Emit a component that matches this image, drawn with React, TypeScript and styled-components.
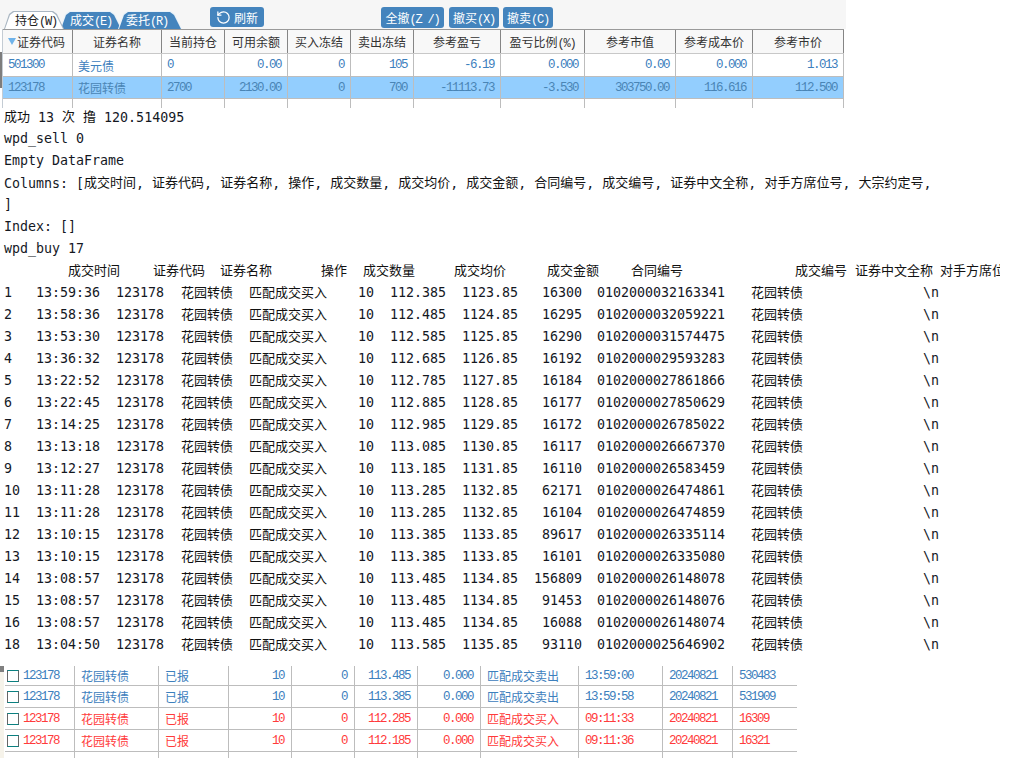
import React from 'react';
import styled, { createGlobalStyle } from 'styled-components';
import { RotateCcw } from 'lucide-react';

const Global = createGlobalStyle`
  html, body { margin: 0; padding: 0; background: #fff; }
  #root { width: 1015px; height: 769px; overflow: hidden; }
`;

const BLUE = '#3d80bd';
const RED = '#ff3b3b';
const CJK = '"Noto Sans CJK SC", "Liberation Sans", sans-serif';
const MONO = '"Liberation Mono", "Noto Sans CJK SC", monospace';
const CONSOLE = '"DejaVu Sans Mono", "Noto Sans CJK SC", monospace';

const Page = styled.div`
  width: 1015px;
  height: 769px;
  overflow: hidden;
  position: relative;
  font-family: ${CJK};
  font-size: 12px;
`;

/* ---------- toolbar ---------- */
const Toolbar = styled.div`
  width: 846px;
  height: 29px;
  background: #f6f6f6;
  display: flex;
  align-items: flex-start;
  box-sizing: border-box;
  padding-top: 7px;
`;
const Tabs = styled.div`
  display: flex;
  margin: 4px 0 0 4px;
  height: 18px;
  width: 206px;
`;
const Tab = styled.div<{ $active?: boolean; $w: number; $pl: number }>`
  width: ${p => p.$w}px;
  height: 18px;
  margin-right: -4px;
  padding-left: ${p => p.$pl}px;
  box-sizing: border-box;
  position: relative;
  z-index: ${p => (p.$active ? 2 : 1)};
  display: flex;
  align-items: center;
  color: ${p => (p.$active ? '#222' : '#fff')};
  background: ${p => (p.$active ? '#a9b6c2' : '#eaf2f8')};
  clip-path: polygon(0 100%, 5px 3px, 9px 0, calc(100% - 11px) 0, calc(100% - 7px) 3px, 100% 100%);
  &::before {
    content: '';
    position: absolute;
    inset: 0;
    background: ${p => (p.$active ? '#fff' : '#4484bd')};
    clip-path: polygon(1px 100%, 6px 4px, 10px 1px, calc(100% - 12px) 1px, calc(100% - 8px) 4px, calc(100% - 1px) 100%);
  }
  & > span { position: relative; }
`;
const Latin = styled.span`
  font-family: ${MONO};
  font-size: 12px;
  letter-spacing: -1.2px;
`;
const Button = styled.div<{ $w: number; $ml: number; $h?: number }>`
  width: ${p => p.$w}px;
  height: ${p => p.$h ?? 21}px;
  margin-left: ${p => p.$ml}px;
  background: #4484bd;
  border-radius: 3px;
  color: #fff;
  display: flex;
  align-items: center;
  justify-content: center;
  gap: 3px;
  white-space: pre;
`;

/* ---------- positions table ---------- */
const POS_COLS = '70px 89px 63px 63px 63px 63px 87px 84px 91px 77px 91px';
const ScrollMark = styled.div`
  position: absolute;
  left: 0;
  top: 52px;
  width: 2px;
  height: 36px;
  background: #7d7d7d;
`;
const Positions = styled.div`
  margin-left: 2px;
  width: 841px;
  border-left: 1px solid #c4ccd4;
`;
const HeadRow = styled.div`
  display: grid;
  grid-template-columns: ${POS_COLS};
  height: 25px;
  box-sizing: border-box;
  background: #f8f8f8;
  border-top: 1px solid #9a9a9a;
  border-bottom: 1px solid #c8c8c8;
`;
const HeadCell = styled.div`
  box-sizing: border-box;
  border-right: 1px solid #858585;
  display: flex;
  align-items: center;
  justify-content: center;
  color: #333;
  gap: 1px;
`;
const SortMark = styled.i`
  width: 0;
  height: 0;
  border-left: 4px solid transparent;
  border-right: 4px solid transparent;
  border-top: 7px solid #6fb3ea;
  margin-left: -2px;
`;
const PosRow = styled.div<{ $selected?: boolean; $h: number; $ruled?: boolean }>`
  display: grid;
  grid-template-columns: ${POS_COLS};
  height: ${p => p.$h}px;
  box-sizing: border-box;
  background: ${p => (p.$selected ? '#93cefe' : '#fff')};
  border-bottom: ${p => (p.$ruled ? '1px solid #bdbdbd' : 'none')};
  color: ${p => (p.$selected ? '#4a85b5' : BLUE)};
`;
const Cell = styled.div<{ $right?: boolean; $name?: boolean }>`
  box-sizing: border-box;
  border-right: 1px solid #bdbdbd;
  display: flex;
  align-items: center;
  justify-content: ${p => (p.$right ? 'flex-end' : 'flex-start')};
  padding: ${p => (p.$right ? '0 6px 0 0' : '0 0 0 5px')};
  white-space: pre;
  font-family: ${p => (p.$name ? CJK : MONO)};
  font-size: ${p => (p.$name ? 12 : 12.5)}px;
  letter-spacing: ${p => (p.$name ? 0 : -1.5)}px;
`;

/* ---------- console ---------- */
const Console = styled.div`
  margin-top: -2px;
  padding-left: 4px;
  font-family: ${CONSOLE};
  font-size: 13.3px;
  color: #14181f;
`;
const Line = styled.div`
  height: 22px;
  line-height: 22px;
  white-space: pre;
`;
const Han = styled.span`
  font-family: ${CJK};
  font-size: 13px;
  color: #111;
`;
const GridHan = styled(Han)`
  position: relative;
  top: -1px;
`;
const FrameHead = styled.div`
  display: grid;
  grid-template-columns: 64px 85px 67px 101px 42px 91px 93px 84px 164px 60px 85px 60px;
  height: 22px;
  line-height: 22px;
  white-space: pre;
  overflow: hidden;
  width: 996px;
`;
const Clip = styled.div`
  overflow: hidden;
`;
const FrameRow = styled.div`
  display: grid;
  grid-template-columns: 32px 80px 65px 68px 101px 24px 72px 72px 64px 143px 198px 20px;
  height: 22px;
  line-height: 22px;
  white-space: pre;
`;
const Num = styled.div`
  text-align: right;
`;
const Pad = styled.div`
  padding-left: 26px;
`;

/* ---------- orders table ---------- */
const ORD_COLS = '70px 84px 70px 63px 63px 63px 63px 98px 84px 70px 63px';
const Orders = styled.div`
  width: 797px;
  display: flex;
  margin-top: 10px;
`;
const Gutter = styled.div`
  flex: none;
  width: 4px;
  height: 92px;
  margin-right: 1px;
  background: linear-gradient(#808080 0 6px, #f6f3ea 6px);
`;
const OrdBody = styled.div`
  flex: 1;
`;
const OrdRow = styled.div<{ $h: number; $ruled?: boolean; $red?: boolean }>`
  display: grid;
  grid-template-columns: ${ORD_COLS};
  height: ${p => p.$h}px;
  box-sizing: border-box;
  border-bottom: ${p => (p.$ruled ? '1px solid #bdbdbd' : 'none')};
  color: ${p => (p.$red ? RED : BLUE)};
`;
const OrdCell = styled.div<{ $right?: boolean; $name?: boolean; $last?: boolean }>`
  box-sizing: border-box;
  border-right: ${p => (p.$last ? 'none' : '1px solid #bdbdbd')};
  display: flex;
  align-items: center;
  justify-content: ${p => (p.$right ? 'flex-end' : 'flex-start')};
  padding: ${p => (p.$right ? '0 7px 0 0' : '0 0 0 6px')};
  white-space: pre;
  font-family: ${p => (p.$name ? CJK : MONO)};
  font-size: ${p => (p.$name ? 12 : 12.5)}px;
  letter-spacing: ${p => (p.$name ? 0 : -1.5)}px;
`;
const CodeCell = styled(OrdCell)`
  padding-left: 2px;
  gap: 4px;
`;
const Check = styled.i`
  width: 12px;
  height: 12px;
  box-sizing: border-box;
  border: 1px solid #666;
  border-top-color: #0a8080;
  border-bottom-color: #0a8080;
  flex: none;
`;

/* ---------- data ---------- */
const split = (s: string) =>
  s.split(/([\u4e00-\u9fff]+)/).map((t, i) => (i % 2 ? <GridHan key={i}>{t}</GridHan> : t));
const T = ({ s }: { s: string }) => <>{split(s)}</>;

const head = ['证券名称', '当前持仓', '可用余额', '买入冻结', '卖出冻结', '参考盈亏'];
const frameHead = ['', '成交时间', '证券代码', '证券名称', '操作', '成交数量', '成交均价', '成交金额', '合同编号', '成交编号', '证券中文全称', '对手方席位号'];

const trades: [string, string, string, string, string, string][] = [
  ['1', '13:59:36', '112.385', '1123.85', '16300', '0102000032163341'],
  ['2', '13:58:36', '112.485', '1124.85', '16295', '0102000032059221'],
  ['3', '13:53:30', '112.585', '1125.85', '16290', '0102000031574475'],
  ['4', '13:36:32', '112.685', '1126.85', '16192', '0102000029593283'],
  ['5', '13:22:52', '112.785', '1127.85', '16184', '0102000027861866'],
  ['6', '13:22:45', '112.885', '1128.85', '16177', '0102000027850629'],
  ['7', '13:14:25', '112.985', '1129.85', '16172', '0102000026785022'],
  ['8', '13:13:18', '113.085', '1130.85', '16117', '0102000026667370'],
  ['9', '13:12:27', '113.185', '1131.85', '16110', '0102000026583459'],
  ['10', '13:11:28', '113.285', '1132.85', '62171', '0102000026474861'],
  ['11', '13:11:28', '113.285', '1132.85', '16104', '0102000026474859'],
  ['12', '13:10:15', '113.385', '1133.85', '89617', '0102000026335114'],
  ['13', '13:10:15', '113.385', '1133.85', '16101', '0102000026335080'],
  ['14', '13:08:57', '113.485', '1134.85', '156809', '0102000026148078'],
  ['15', '13:08:57', '113.485', '1134.85', '91453', '0102000026148076'],
  ['16', '13:08:57', '113.485', '1134.85', '16088', '0102000026148074'],
  ['18', '13:04:50', '113.585', '1135.85', '93110', '0102000025646902'],
];

const orders = [
  { red: false, price: '113.485', op: '匹配成交卖出', time: '13:59:00', id: '530483', h: 20 },
  { red: false, price: '113.385', op: '匹配成交卖出', time: '13:59:58', id: '531909', h: 22 },
  { red: true, price: '112.285', op: '匹配成交买入', time: '09:11:33', id: '16309', h: 22 },
  { red: true, price: '112.185', op: '匹配成交买入', time: '09:11:36', id: '16321', h: 22 },
];

const positions = [
  ['501300', '美元债', '0', '0.00', '0', '105', '-6.19', '0.000', '0.00', '0.000', '1.013'],
  ['123178', '花园转债', '2700', '2130.00', '0', '700', '-11113.73', '-3.530', '303750.00', '116.616', '112.500'],
];

const PosCells = ({ r }: { r: string[] }) => (
  <>
    {r.map((v, i) => (
      <Cell key={i} $name={i === 1} $right={i > 2}>{v}</Cell>
    ))}
  </>
);

export default function App() {
  return (
    <Page>
      <Global />
      <ScrollMark />
      <Toolbar>
        <Tabs>
          <Tab $active $w={60} $pl={11}><span>持仓<Latin>(W)</Latin></span></Tab>
          <Tab $w={62} $pl={10}><span>成交<Latin>(E)</Latin></span></Tab>
          <Tab $w={64} $pl={8}><span>委托<Latin>(R)</Latin></span></Tab>
        </Tabs>
        <Button $w={54} $ml={0} $h={20}><RotateCcw size={15} strokeWidth={2} />刷新</Button>
        <Button $w={63} $ml={117}><span>全撤<Latin>(Z /)</Latin></span></Button>
        <Button $w={50} $ml={5}><span>撤买<Latin>(X)</Latin></span></Button>
        <Button $w={50} $ml={4}><span>撤卖<Latin>(C)</Latin></span></Button>
      </Toolbar>

      <Positions>
        <HeadRow>
          <HeadCell><SortMark />证券代码</HeadCell>
          {head.map(h => <HeadCell key={h}>{h}</HeadCell>)}
          <HeadCell><span>盈亏比例<Latin>(%)</Latin></span></HeadCell>
          <HeadCell>参考市值</HeadCell>
          <HeadCell>参考成本价</HeadCell>
          <HeadCell>参考市价</HeadCell>
        </HeadRow>
        <PosRow $h={23} $ruled><PosCells r={positions[0]} /></PosRow>
        <PosRow $h={22} $ruled $selected><PosCells r={positions[1]} /></PosRow>
        <PosRow $h={9}><PosCells r={Array(11).fill('')} /></PosRow>
      </Positions>

      <Console>
        <Line><T s="成功 13 次 撸 120.514095" /></Line>
        <Line>wpd_sell 0</Line>
        <Line>Empty DataFrame</Line>
        <Line><T s="Columns: [成交时间, 证券代码, 证券名称, 操作, 成交数量, 成交均价, 成交金额, 合同编号, 成交编号, 证券中文全称, 对手方席位号, 大宗约定号," /></Line>
        <Line>]</Line>
        <Line>Index: []</Line>
        <Line>wpd_buy 17</Line>
        <FrameHead>
          {frameHead.map((h, i) => <Clip key={i}><GridHan>{h}</GridHan></Clip>)}
        </FrameHead>
        {trades.map(t => (
          <FrameRow key={t[0]}>
            <div>{t[0]}</div>
            <div>{t[1]}</div>
            <div>123178</div>
            <div><GridHan>花园转债</GridHan></div>
            <div><GridHan>匹配成交买入</GridHan></div>
            <Num>10</Num>
            <Num>{t[2]}</Num>
            <Num>{t[3]}</Num>
            <Num>{t[4]}</Num>
            <Num>{t[5]}</Num>
            <Pad><GridHan>花园转债</GridHan></Pad>
            <div>\n</div>
          </FrameRow>
        ))}
      </Console>

      <Orders>
        <Gutter />
        <OrdBody>
          {orders.map(o => (
            <OrdRow key={o.time} $h={o.h} $ruled $red={o.red}>
              <CodeCell><Check />123178</CodeCell>
              <OrdCell $name>花园转债</OrdCell>
              <OrdCell $name>已报</OrdCell>
              <OrdCell $right>10</OrdCell>
              <OrdCell $right>0</OrdCell>
              <OrdCell $right>{o.price}</OrdCell>
              <OrdCell $right>0.000</OrdCell>
              <OrdCell $name>{o.op}</OrdCell>
              <OrdCell>{o.time}</OrdCell>
              <OrdCell>20240821</OrdCell>
              <OrdCell $last>{o.id}</OrdCell>
            </OrdRow>
          ))}
          <OrdRow $h={6}>
            {Array.from({ length: 11 }, (_, i) => <OrdCell key={i} $last={i === 10} />)}
          </OrdRow>
        </OrdBody>
      </Orders>
    </Page>
  );
}
